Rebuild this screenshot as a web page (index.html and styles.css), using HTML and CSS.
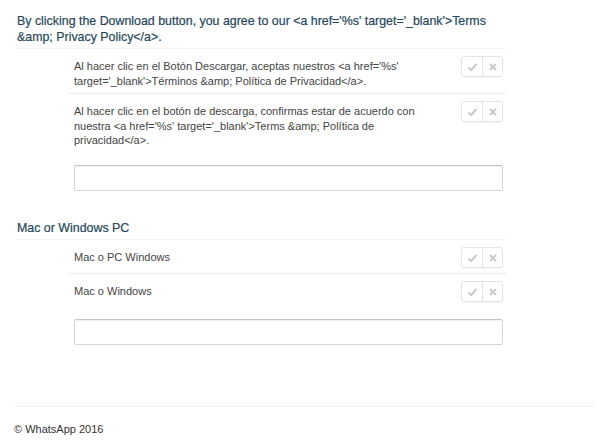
FILE: index.html
```html
<!DOCTYPE html>
<html lang="en">
<head>
    <meta charset="UTF-8">
    <meta name="viewport" content="width=device-width, initial-scale=1.0">
    <title>Translations</title>
    <link rel="stylesheet" href="styles.css">
</head>
<body>
    <div class="page">
        <div class="string-block">
            <h2 class="source">By clicking the Download button, you agree to our &lt;a href='%s' target='_blank'&gt;Terms &amp;amp; Privacy Policy&lt;/a&gt;.</h2>
            <div class="suggestions">
                <div class="suggestion">
                    <div class="text">Al hacer clic en el Botón Descargar, aceptas nuestros &lt;a href='%s' target='_blank'&gt;Términos &amp;amp; Política de Privacidad&lt;/a&gt;.</div>
                    <div class="vote">
                        <button class="vote-btn" type="button"><svg width="11" height="10" viewBox="0 0 11 10"><path d="M1.5 5.5 L4.2 8 L9.5 1.8" fill="none" stroke="#c9c9c9" stroke-width="2"/></svg></button>
                        <button class="vote-btn" type="button"><svg width="10" height="10" viewBox="0 0 10 10"><path d="M2 2 L8 8 M8 2 L2 8" fill="none" stroke="#c9c9c9" stroke-width="2"/></svg></button>
                    </div>
                </div>
                <div class="suggestion">
                    <div class="text">Al hacer clic en el botón de descarga, confirmas estar de acuerdo con nuestra &lt;a href='%s' target='_blank'&gt;Terms &amp;amp; Política de privacidad&lt;/a&gt;.</div>
                    <div class="vote">
                        <button class="vote-btn" type="button"><svg width="11" height="10" viewBox="0 0 11 10"><path d="M1.5 5.5 L4.2 8 L9.5 1.8" fill="none" stroke="#c9c9c9" stroke-width="2"/></svg></button>
                        <button class="vote-btn" type="button"><svg width="10" height="10" viewBox="0 0 10 10"><path d="M2 2 L8 8 M8 2 L2 8" fill="none" stroke="#c9c9c9" stroke-width="2"/></svg></button>
                    </div>
                </div>
            </div>
            <input class="new-translation" type="text">
        </div>

        <div class="string-block">
            <h2 class="source">Mac or Windows PC</h2>
            <div class="suggestions">
                <div class="suggestion">
                    <div class="text">Mac o PC Windows</div>
                    <div class="vote">
                        <button class="vote-btn" type="button"><svg width="11" height="10" viewBox="0 0 11 10"><path d="M1.5 5.5 L4.2 8 L9.5 1.8" fill="none" stroke="#c9c9c9" stroke-width="2"/></svg></button>
                        <button class="vote-btn" type="button"><svg width="10" height="10" viewBox="0 0 10 10"><path d="M2 2 L8 8 M8 2 L2 8" fill="none" stroke="#c9c9c9" stroke-width="2"/></svg></button>
                    </div>
                </div>
                <div class="suggestion">
                    <div class="text">Mac o Windows</div>
                    <div class="vote">
                        <button class="vote-btn" type="button"><svg width="11" height="10" viewBox="0 0 11 10"><path d="M1.5 5.5 L4.2 8 L9.5 1.8" fill="none" stroke="#c9c9c9" stroke-width="2"/></svg></button>
                        <button class="vote-btn" type="button"><svg width="10" height="10" viewBox="0 0 10 10"><path d="M2 2 L8 8 M8 2 L2 8" fill="none" stroke="#c9c9c9" stroke-width="2"/></svg></button>
                    </div>
                </div>
            </div>
            <input class="new-translation" type="text">
        </div>
    </div>

    <div class="footer">© WhatsApp 2016</div>
</body>
</html>
```

FILE: styles.css
```css
body {
    font-family: "Liberation Sans", Arial, sans-serif;
    margin: 0;
    padding: 0;
    background-color: #fff;
    color: #444;
}
.page {
    padding: 14px 0 0 17px;
    width: 490px;
}
.string-block {
    margin-bottom: 30px;
}
.string-block:last-child {
    margin-bottom: 0;
}
.source {
    font-size: 12.4px;
    font-weight: normal;
    line-height: 15.5px;
    color: #26475a;
    margin: 0;
    padding-bottom: 3px;
    border-bottom: 1px solid #f3f3f3;
    -webkit-text-stroke: 0.2px #26475a;
}
.suggestions {
    margin-left: 51px;
}
.suggestion {
    display: flex;
    align-items: flex-start;
    padding: 7px 4px 5px 6px;
}
.suggestion + .suggestion {
    border-top: 1px solid #eeeeee;
}
.text {
    flex: 1;
    font-size: 11px;
    line-height: 14.5px;
    padding-top: 3px;
    padding-right: 20px;
    color: #444;
}
.vote {
    display: flex;
    border: 1px solid #e4e4e4;
    border-radius: 3px;
    box-shadow: 0 1px 1px rgba(0, 0, 0, 0.04);
}
.vote-btn {
    width: 20px;
    height: 19px;
    padding: 0;
    border: none;
    background: #fff;
    display: flex;
    align-items: center;
    justify-content: center;
    border-radius: 3px;
}
.vote-btn + .vote-btn {
    border-left: 1px solid #e4e4e4;
    border-radius: 0 3px 3px 0;
}
.new-translation {
    display: block;
    margin: 12px 0 0 57px;
    width: 429px;
    height: 26px;
    box-sizing: border-box;
    border: 1px solid #d6d6d6;
    border-top-color: #c4c4c4;
    border-radius: 2px;
    box-shadow: inset 0 1px 1px rgba(0, 0, 0, 0.06);
}
.footer {
    margin: 61px 2px 0 15px;
    border-top: 1px solid #f3f3f3;
    padding-top: 16px;
    font-size: 11px;
    color: #333;
    text-indent: -1px;
}
```
